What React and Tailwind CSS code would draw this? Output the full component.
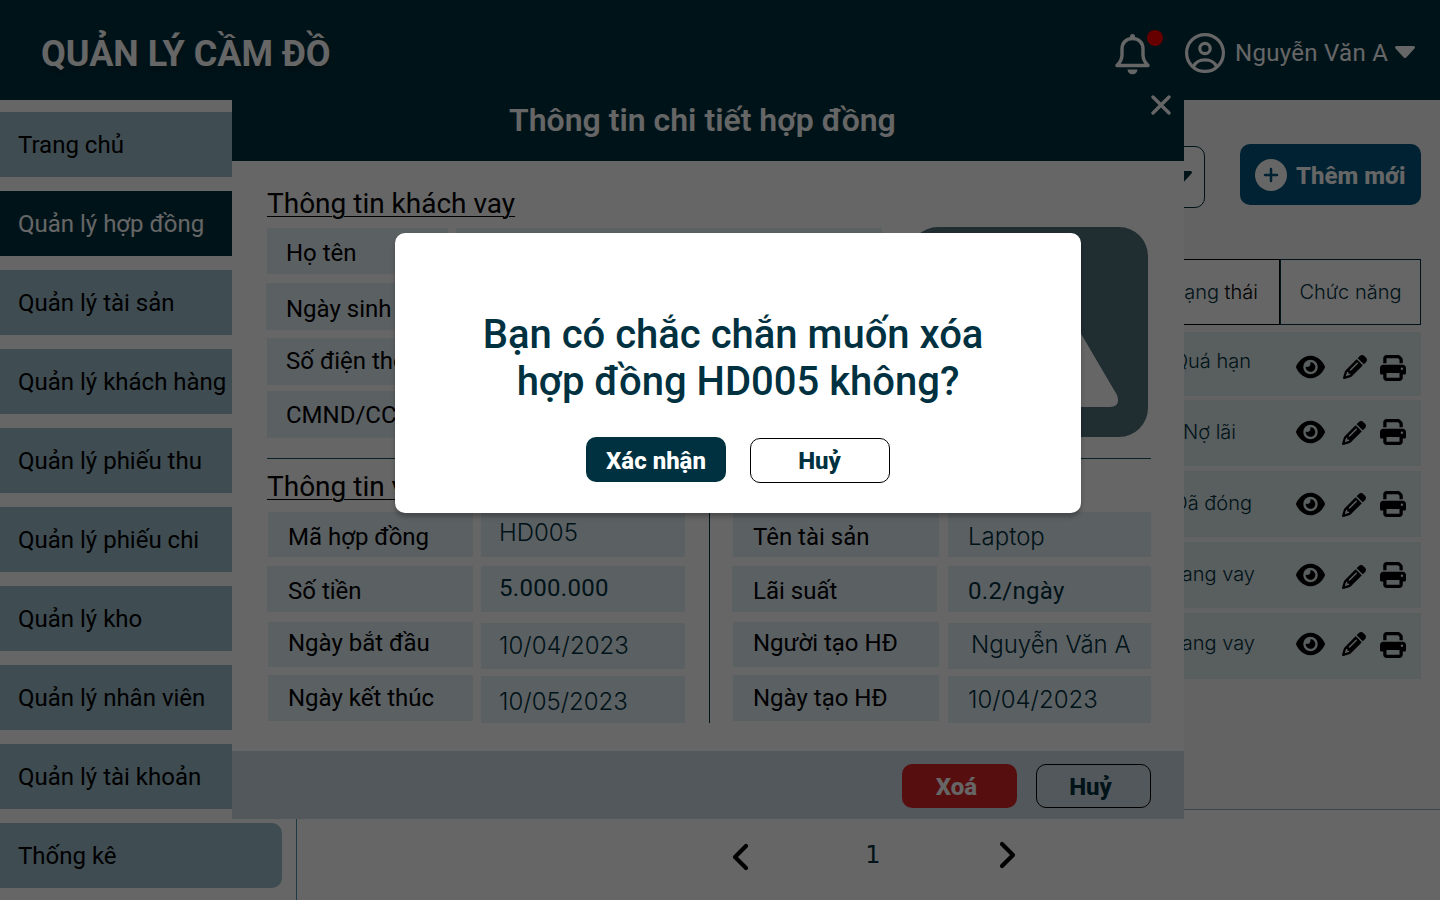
import { FaEye, FaPencil, FaPrint } from "react-icons/fa6";

const ROBOTO = "font-['Roboto','Liberation_Sans',sans-serif]";
const INTER = "font-['Inter','Liberation_Sans',sans-serif]";

const menu = [
  "Trang chủ",
  "Quản lý hợp đồng",
  "Quản lý tài sản",
  "Quản lý khách hàng",
  "Quản lý phiếu thu",
  "Quản lý phiếu chi",
  "Quản lý kho",
  "Quản lý nhân viên",
  "Quản lý tài khoản",
  "Thống kê",
];

const rows = [
  { status: "Quá hạn", box: "h-16", text: "pr-[29px] pt-[17px]", eye: "mt-[22px]", pen: "mt-[23px] ml-[18px] mr-[13px]", print: "mt-[23px]" },
  { status: "Nợ lãi", box: "mt-1 h-[66px]", text: "pr-11 pt-5", eye: "mt-[19px]", pen: "mt-[21px] ml-[17px] mr-[14px]", print: "mt-[19px]" },
  { status: "Đã đóng", box: "mt-[5px] h-[66px]", text: "pr-7 pt-5", eye: "mt-5", pen: "mt-[22px] ml-[17px] mr-[14px]", print: "mt-5" },
  { status: "Đang vay", box: "mt-[5px] h-[66px]", text: "pr-[25px] pt-5", eye: "mt-5", pen: "mt-[23px] ml-[17px] mr-[14px]", print: "mt-5" },
  { status: "Đang vay", box: "mt-[5px] h-[66px]", text: "pr-[25px] pt-[18px]", eye: "mt-[18px]", pen: "mt-[19px] ml-[17px] mr-[14px]", print: "mt-[19px]" },
];

const customerLabels = [
  { text: "Họ tên", cls: "ml-px h-[46px] pt-[11px] pl-[19px]" },
  { text: "Ngày sinh", cls: "mt-[9px] h-[47px] pt-3 pl-5" },
  { text: "Số điện thoại", cls: "ml-px mt-2 h-[47px] pt-[9px] pl-[19px]" },
  { text: "CMND/CCCD", cls: "ml-px mt-1.5 h-[47px] pt-[10px] pl-[19px]" },
];
const loanLabels = [
  { text: "Mã hợp đồng", cls: "ml-px h-[45px] pt-[11px] pl-5" },
  { text: "Số tiền", cls: "mt-[9px] h-[46px] pt-[11px] pl-[21px]" },
  { text: "Ngày bắt đầu", cls: "ml-px mt-2.5 h-[45px] pt-[7px] pl-5" },
  { text: "Ngày kết thúc", cls: "ml-px mt-2 h-[46px] pt-[9px] pl-5" },
];
const loanValues = [
  { text: "HD005", cls: "h-[45px] pt-[7px] font-['Inter',sans-serif] font-light" },
  { text: "5.000.000", cls: "mt-[9px] h-[46px] pt-2 tracking-[0.3px]" },
  { text: "10/04/2023", cls: "mt-[11px] h-[46px] pt-[9px] font-['Inter',sans-serif] font-light" },
  { text: "10/05/2023", cls: "mt-[7px] h-[47px] pt-3 font-['Inter',sans-serif] font-light" },
];
const assetLabels = [
  { text: "Tên tài sản", cls: "ml-px h-[45px] pt-[11px] pl-5" },
  { text: "Lãi suất", cls: "mr-0.5 mt-[9px] h-[46px] pt-[11px] pl-[21px]" },
  { text: "Người tạo HĐ", cls: "ml-px mt-2.5 h-[45px] pt-[7px] pl-5" },
  { text: "Ngày tạo HĐ", cls: "ml-px mt-2 h-[46px] pt-[9px] pl-5" },
];
const assetValues = [
  { text: "Laptop", cls: "h-[45px] pt-[11px] pl-5 font-['Inter',sans-serif] font-light" },
  { text: "0.2/ngày", cls: "mt-[9px] h-[46px] pt-[11px] pl-5 tracking-[0.3px]" },
  { text: "Nguyễn Văn A", cls: "mt-[11px] h-[46px] pt-2 pl-[23px] font-['Inter',sans-serif] font-light" },
  { text: "10/04/2023", cls: "mt-[7px] h-[47px] pt-[10px] pl-5 font-['Inter',sans-serif] font-light" },
];

function Column({ cells, className }) {
  return (
    <div className={`flex flex-col text-2xl leading-7 ${className}`}>
      {cells.map((c, i) => (
        <div key={i} className={`shrink-0 whitespace-nowrap bg-[#e4eff7] ${c.cls}`}>
          {c.text}
        </div>
      ))}
    </div>
  );
}

function Bell() {
  return (
    <svg className="h-[41px] w-9" viewBox="0 0 36 41" fill="none">
      <path
        d="M17.5 4.5C11 4.5 7 9 7 15V21C7 25.500 5.500 28 2 31.500H33C29.500 28 28 25.500 28 21V15C28 9 24 4.500 17.500 4.500Z"
        stroke="#fff"
        strokeWidth="3.400"
        strokeLinejoin="round"
      />
      <path d="M15 4V2.500a2.500 2.500 0 0 1 5 0V4Z" fill="#fff" />
      <path d="M12.500 35.500h10a5 4.800 0 0 1-10 0Z" fill="#fff" />
    </svg>
  );
}

function UserCircle() {
  return (
    <svg className="size-10" viewBox="0 0 40 40" fill="none" stroke="#fff" strokeWidth="3.200">
      <circle cx="20" cy="20" r="18.400" />
      <circle cx="20" cy="15.500" r="5.200" />
      <path d="M8.500 33.500C11 28.500 14 26.800 20 26.800S29 28.500 31.500 33.500" />
    </svg>
  );
}

function Header() {
  return (
    <header className="flex h-[100px] shrink-0 items-start bg-[#003140] text-white">
      <h1 className="ml-[41px] mt-[33px] text-4xl leading-[42px] font-bold whitespace-nowrap [text-shadow:0_4px_4px_rgba(0,0,0,0.25)]">
        QUẢN LÝ CẦM ĐỒ
      </h1>
      <div className="relative mt-[34px] ml-auto">
        <Bell />
        <span className="absolute -top-1 left-8 size-4 rounded-full bg-[#ff0000]" />
      </div>
      <div className="mt-[33px] ml-[34px]">
        <UserCircle />
      </div>
      <span className="mt-[39px] ml-2.5 w-[150px] text-2xl leading-7 whitespace-nowrap tracking-[0.3px]">Nguyễn Văn A</span>
      <svg className="mt-[46px] mr-[25px] ml-2.5 h-3 w-5" viewBox="0 0 20 12">
        <path d="M1.500 0H18.500A1.400 1.400 0 0 1 19.500 2.400L11.500 11.200A2 2 0 0 1 8.500 11.200L.5 2.400A1.400 1.400 0 0 1 1.500 0Z" fill="#fff" />
      </svg>
    </header>
  );
}

function Sidebar() {
  return (
    <nav className="flex w-[296px] shrink-0 flex-col gap-3.5 pt-3">
      {menu.map((m) => (
        <a
          key={m}
          className={
            "flex h-[65px] w-[282px] shrink-0 items-center rounded-r-[10px] pl-[18px] text-2xl whitespace-nowrap " +
            (m === "Quản lý hợp đồng" ? "bg-[#003140] text-white" : "bg-[#9dbecc] text-black")
          }
        >
          {m}
        </a>
      ))}
    </nav>
  );
}

function Content() {
  return (
    <main className="flex flex-1 flex-col border-l border-[#4a94a8]">
      <div className="flex h-[709px] flex-col items-end bg-[#f7f7f7] pr-[19px]">
        <div className="mt-11 flex items-start">
          <div className="mt-0.5 flex h-[62px] w-[240px] items-center justify-end rounded-[10px] border border-[#003140] bg-white pr-3">
            <svg className="h-3 w-5" viewBox="0 0 20 12">
              <path d="M1.500 0H18.500A1.400 1.400 0 0 1 19.500 2.400L11.500 11.200A2 2 0 0 1 8.500 11.200L.5 2.400A1.400 1.400 0 0 1 1.500 0Z" fill="#003140" />
            </svg>
          </div>
          <button className="ml-[35px] flex h-[61px] w-[181px] items-center rounded-[10px] bg-[#00567d] pl-[15px] text-2xl font-extrabold whitespace-nowrap text-white">
            <svg className="mr-[9px] size-8" viewBox="0 0 32 32">
              <circle cx="16" cy="16" r="16" fill="#fff" />
              <path d="M16 10v12M10 16h12" stroke="#00567d" strokeWidth="2.500" strokeLinecap="round" />
            </svg>
            <span className="pt-[3px]">Thêm mới</span>
          </button>
        </div>
        <div className={`mt-[51px] flex h-[66px] text-xl leading-6 font-light text-[#003140] ${INTER}`}>
          <div className="w-[160px] border border-black bg-white pt-5 pr-[21px] text-right">
            Trạng <span className="text-black">thái</span>
          </div>
          <div className="w-[141px] border border-[#003140] bg-white pt-5 text-center">Chức năng</div>
        </div>
        <div className="mt-[7px] flex flex-col">
          {rows.map((r, i) => (
            <div key={i} className={`flex w-[301px] shrink-0 items-start bg-[#deeaec] ${r.box}`}>
              <div className={`w-[160px] text-right text-xl leading-6 font-light text-[#003140] ${INTER} ${r.text}`}>{r.status}</div>
              <FaEye className={`ml-4 h-[26px] w-[29px] shrink-0 ${r.eye}`} />
              <FaPencil className={`size-6 shrink-0 ${r.pen}`} />
              <FaPrint className={`size-[26px] shrink-0 ${r.print}`} />
            </div>
          ))}
        </div>
      </div>
      <div className="flex flex-1 items-start border-t border-[#8aaebb] bg-white">
        <svg className="mt-[33px] ml-[434px] h-7 w-[18px]" viewBox="0 0 18 28" fill="none">
          <path d="M15 3L4 14L15 25" stroke="#000" strokeWidth="4.200" strokeLinecap="round" strokeLinejoin="round" />
        </svg>
        <span className="mt-[31px] ml-[116px] w-4 text-center font-['DejaVu_Sans',sans-serif] text-2xl leading-7 text-[#003140]">1</span>
        <svg className="mt-[31px] ml-[118px] h-7 w-[18px]" viewBox="0 0 18 28" fill="none">
          <path d="M3 3L14 14L3 25" stroke="#000" strokeWidth="4.200" strokeLinecap="round" strokeLinejoin="round" />
        </svg>
      </div>
    </main>
  );
}

function DetailModal() {
  return (
    <section className="absolute top-[78px] left-[232px] flex h-[741px] w-[952px] flex-col bg-white text-black">
      <div className="flex h-[83px] shrink-0 items-start bg-[#003140] text-white">
        <h2 className="mt-[23px] ml-[277px] text-[32px] leading-[38px] font-semibold whitespace-nowrap">Thông tin chi tiết hợp đồng</h2>
        <svg className="mt-[17px] mr-[13px] ml-auto size-5" viewBox="0 0 20 20">
          <path d="M2 2L18 18M18 2L2 18" stroke="#fff" strokeWidth="3.400" strokeLinecap="round" />
        </svg>
      </div>
      <div className="flex flex-1 flex-col">
        <h3 className="mt-[26px] ml-[35px] text-[28px] leading-[33px] whitespace-nowrap underline decoration-1 underline-offset-[3px]">Thông tin khách vay</h3>
        <div className="mt-2 ml-[34px] flex items-start">
          <Column cells={customerLabels} className="w-[182px]" />
          <div className="ml-2 flex w-[426px] flex-col gap-2">
            <div className="h-[46px] bg-[#e4eff7]" />
            <div className="h-[47px] bg-[#e4eff7]" />
            <div className="h-[47px] bg-[#e4eff7]" />
            <div className="h-[47px] bg-[#e4eff7]" />
          </div>
          <svg className="-mt-px ml-[27px] h-[210px] w-[239px]" viewBox="0 0 239 210">
            <rect width="239" height="210" rx="29" fill="#50717a" />
            <path d="M36 180L94 92Q100 84 106 92L126 122L149 88Q155 80 161 88L208 168Q212 180 201 180Z" fill="#fff" />
          </svg>
        </div>
        <div className="mt-[19px] ml-[35px] h-px w-[884px] shrink-0 bg-[#1b5361]" />
        <div className="relative ml-[35px] flex h-[53px] shrink-0">
          <h3 className="mt-[11px] text-[28px] leading-[33px] whitespace-nowrap underline decoration-1 underline-offset-[3px]">Thông tin vay</h3>
        </div>
        <div className="ml-[35px] flex items-start">
          <Column cells={loanLabels} className="w-[206px]" />
          <Column cells={loanValues} className="ml-2 w-[204px] text-[#003140] *:pl-[18px]" />
          <div className="ml-6 h-[211px] w-px bg-[#003140]" />
          <Column cells={assetLabels} className="ml-[22px] w-[207px]" />
          <Column cells={assetValues} className="ml-[9px] w-[203px] text-[#003140]" />
        </div>
      </div>
      <div className="flex h-[68px] shrink-0 items-start justify-end bg-[#cfdde6] pt-[13px] pr-[33px] text-2xl font-extrabold">
        <button className="h-11 w-[115px] rounded-[10px] bg-[#da2427] pr-1.5 pt-0.5 text-white">Xoá</button>
        <button className="ml-[19px] h-11 w-[115px] rounded-[10px] border border-black pr-1.5 pt-0.5 text-[#003140]">Huỷ</button>
      </div>
    </section>
  );
}

function ConfirmDialog() {
  return (
    <div className="absolute inset-0 flex items-start bg-black/60">
      <div className="mt-[233px] ml-[395px] flex h-[280px] w-[686px] flex-col items-center rounded-[10px] bg-white text-[#003140] shadow-[0_4px_4px_rgba(0,0,0,0.25)]">
        <p className="mt-[78px] text-center text-[40px] leading-[47px] font-medium whitespace-nowrap">
          Bạn có chắc chắn muốn xóa&nbsp;
          <br />
          hợp đồng HD005 không?
        </p>
        <div className="mt-8 flex items-start gap-6 text-2xl font-extrabold">
          <button className="h-[45px] w-[140px] rounded-[10px] bg-[#003140] pt-[3px] text-white">Xác nhận</button>
          <button className="mt-px h-[45px] w-[140px] rounded-[10px] border border-black pr-px text-[#003140]">Huỷ</button>
        </div>
      </div>
    </div>
  );
}

export default function App() {
  return (
    <div className={`relative flex h-[900px] w-[1440px] flex-col overflow-hidden bg-white text-black ${ROBOTO}`}>
      <Header />
      <div className="flex flex-1">
        <Sidebar />
        <Content />
      </div>
      <DetailModal />
      <ConfirmDialog />
    </div>
  );
}
